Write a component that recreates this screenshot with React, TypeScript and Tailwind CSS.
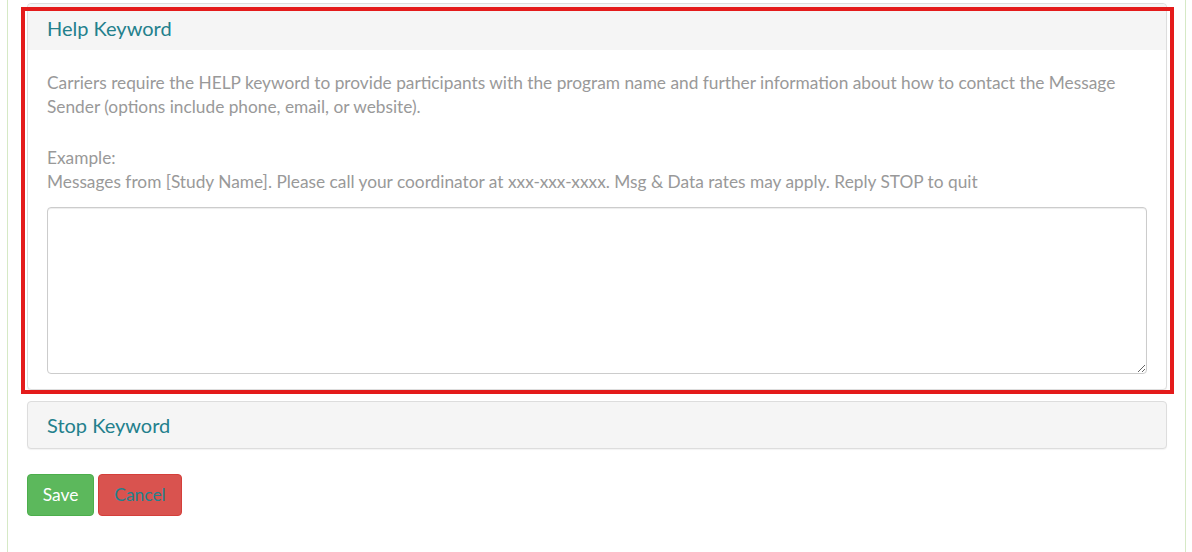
import React from 'react';

const App: React.FC = () => {
  return (
    <div className="min-h-[552px] bg-white font-['Lato','Open_Sans',sans-serif]">
      <div className="ml-[7px] w-[1179px] min-h-[560px] border-x border-[#d6e9c6] pl-[19px] pr-[18px] pt-[3px]">
        <div className="relative">
          <div className="rounded-[4px] border border-[#ddd] bg-white shadow-[0_1px_1px_rgba(0,0,0,0.05)]">
            <div className="h-[46px] rounded-t-[4px] bg-[#f5f5f5] px-[19px] flex items-center">
              <h3 className="text-[20px] text-[#23808c] leading-none mt-[2px]">Help Keyword</h3>
            </div>
            <div className="px-[19px] pt-[21px] pb-[15px] text-[17.3px] leading-[24px] text-[#999]">
              <p>
                Carriers require the HELP keyword to provide participants with the program name and further information about how to contact the Message Sender (options include phone, email, or website).
              </p>
              <p className="mt-[27px]">
                Example:
                <br />
                Messages from [Study Name]. Please call your coordinator at xxx-xxx-xxxx. Msg &amp; Data rates may apply. Reply STOP to quit
              </p>
              <textarea className="mt-[13px] block w-full h-[167px] rounded-[4px] border border-[#ccc] shadow-[inset_0_1px_1px_rgba(0,0,0,0.075)] outline-none" />
            </div>
          </div>
          <div className="pointer-events-none absolute left-[-6px] right-[-7px] top-[4px] bottom-[-4px] border-4 border-[#e41b1b]" />
        </div>
        <div className="mt-[11px] h-[48px] rounded-[4px] border border-[#ddd] bg-[#f5f5f5] px-[19px] flex items-center shadow-[0_1px_1px_rgba(0,0,0,0.05)]">
          <h3 className="text-[20px] text-[#23808c] leading-none">Stop Keyword</h3>
        </div>
        <div className="mt-[25px] flex gap-[4px]">
          <button className="h-[42px] w-[67px] rounded-[4px] border border-[#4cae4c] bg-[#5cb85c] text-[17.4px] text-white">Save</button>
          <button className="h-[42px] w-[84px] rounded-[4px] border border-[#d43f3a] bg-[#d9534f] text-[17.4px] text-[#23808c]">Cancel</button>
        </div>
      </div>
    </div>
  );
};

export default App;
